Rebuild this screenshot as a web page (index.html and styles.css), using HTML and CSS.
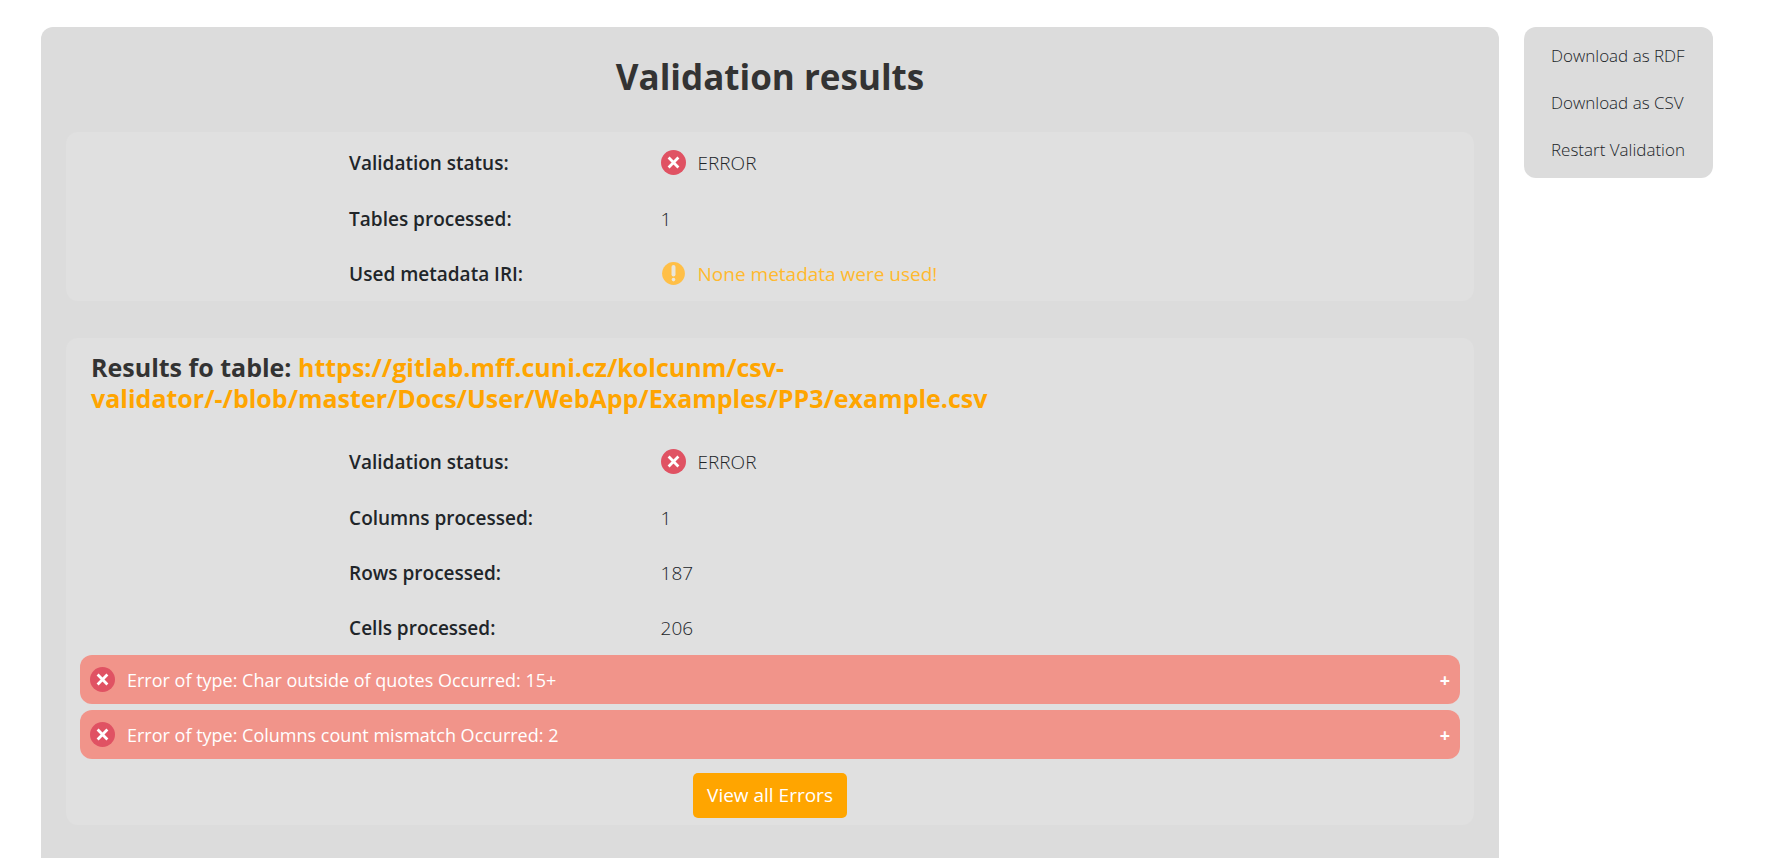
FILE: index.html
```html
<!DOCTYPE html>
<html lang="en">
<head>
<meta charset="utf-8">
<title>Validation results</title>
<link rel="stylesheet" href="styles.css">
</head>
<body>
<svg class="sprite" aria-hidden="true">
  <symbol id="icon-error" viewBox="0 0 25 25">
    <circle cx="12.5" cy="12.5" r="12.5" fill="#e05263"/>
    <path d="M8.6 8.6l7.8 7.8M16.4 8.6l-7.8 7.8" stroke="#fff" stroke-width="2.8" stroke-linecap="square"/>
  </symbol>
  <symbol id="icon-warning" viewBox="0 0 25 25">
    <circle cx="12.5" cy="12.5" r="11.4" fill="#ffbf47"/>
    <path d="M12.5 6v7.6" stroke="#eae6dc" stroke-width="4" stroke-linecap="round"/>
    <circle cx="12.5" cy="18.6" r="1.8" fill="#eae6dc"/>
  </symbol>
</svg>
<div class="page">
  <main class="panel">
    <h1 class="title">Validation results</h1>
    <section class="card summary">
      <dl class="facts">
        <dt>Validation status:</dt>
        <dd><svg class="icon"><use href="#icon-error"/></svg>ERROR</dd>
        <dt>Tables processed:</dt>
        <dd>1</dd>
        <dt>Used metadata IRI:</dt>
        <dd class="warning"><svg class="icon"><use href="#icon-warning"/></svg>None metadata were used!</dd>
      </dl>
    </section>
    <section class="card">
      <h2 class="subtitle">Results fo table: <a href="#">https://gitlab.mff.cuni.cz/kolcunm/csv-validator/-/blob/master/Docs/User/WebApp/Examples/PP3/example.csv</a></h2>
      <dl class="facts">
        <dt>Validation status:</dt>
        <dd><svg class="icon"><use href="#icon-error"/></svg>ERROR</dd>
        <dt>Columns processed:</dt>
        <dd>1</dd>
        <dt>Rows processed:</dt>
        <dd>187</dd>
        <dt>Cells processed:</dt>
        <dd>206</dd>
      </dl>
      <div class="errors">
        <button class="error-row" type="button"><svg class="icon"><use href="#icon-error"/></svg><span class="error-text">Error of type: Char outside of quotes Occurred: 15+</span><span class="plus">+</span></button>
        <button class="error-row" type="button"><svg class="icon"><use href="#icon-error"/></svg><span class="error-text">Error of type: Columns count mismatch Occurred: 2</span><span class="plus">+</span></button>
      </div>
      <button class="view-all" type="button">View all Errors</button>
    </section>
  </main>
  <nav class="menu">
    <a href="#">Download as RDF</a>
    <a href="#">Download as CSV</a>
    <a href="#">Restart Validation</a>
  </nav>
</div>
</body>
</html>
```
FILE: styles.css
```css
* { box-sizing: border-box; }
body {
  margin: 0;
  background: #fff;
  color: #212529;
  font-family: "Open Sans", "Noto Sans", sans-serif;
  font-size: 19px;
  line-height: 28px;
}
.sprite { display: none; }
.page {
  display: flex;
  align-items: stretch;
  gap: 25px;
  min-height: 100vh;
  padding: 27px 65px 0 41px;
}
.panel {
  flex: 1;
  min-width: 0;
  padding: 24px 25px 32px;
  background: #dcdcdc;
  border-radius: 12px 12px 0 0;
}
.title {
  margin: 0 0 29px;
  color: #333;
  font-size: 35px;
  line-height: 52px;
  font-weight: 700;
  text-align: center;
}
.card {
  display: flex;
  flex-direction: column;
  padding: 14px 14px 7px;
  background: #e0e0e0;
  border-radius: 12px;
}
.summary {
  margin-bottom: 37px;
  padding: 2px 14px 0;
}
.subtitle {
  margin: 0 11px 19px;
  color: #333;
  font-size: 25px;
  line-height: 31px;
  font-weight: 700;
}
.subtitle a { color: #ffa500; text-decoration: none; }
.facts {
  display: grid;
  grid-template-columns: 37% 1fr;
  width: 61%;
  margin: 0 auto;
}
.facts dt, .facts dd {
  display: flex;
  align-items: center;
  min-height: 55px;
  margin: 0;
}
.facts dt { font-weight: 600; }
.facts dd { font-weight: 300; }
.facts dt:first-of-type, .facts dd:first-of-type { min-height: 57px; }
.facts .warning { color: #ffb92e; font-weight: 400; }
.icon {
  flex: none;
  width: 25px;
  height: 25px;
  margin-right: 12px;
}
.errors {
  display: grid;
  gap: 6px;
  margin-bottom: 14px;
}
.error-row {
  display: flex;
  align-items: center;
  width: 100%;
  min-height: 49px;
  padding: 2px 10px;
  border: 0;
  border-radius: 12px;
  background: #f1948a;
  color: #fff;
  font: inherit;
  font-size: 18px;
  text-align: left;
}
.error-text { flex: 1; }
.plus { font-weight: 700; }
.view-all {
  align-self: center;
  padding: 8px 14px;
  border: 0;
  border-radius: 5px;
  background: #ffa500;
  color: #fff;
  font: inherit;
  line-height: 29px;
}
.menu {
  flex: 0 0 189px;
  align-self: flex-start;
  display: flex;
  flex-direction: column;
  padding: 5px 0;
  background: #dcdcdc;
  border-radius: 12px;
}
.menu a {
  padding: 10px 0 10px 27px;
  color: #212529;
  font-size: 17px;
  line-height: 27px;
  font-weight: 300;
  text-decoration: none;
  white-space: nowrap;
}
```
